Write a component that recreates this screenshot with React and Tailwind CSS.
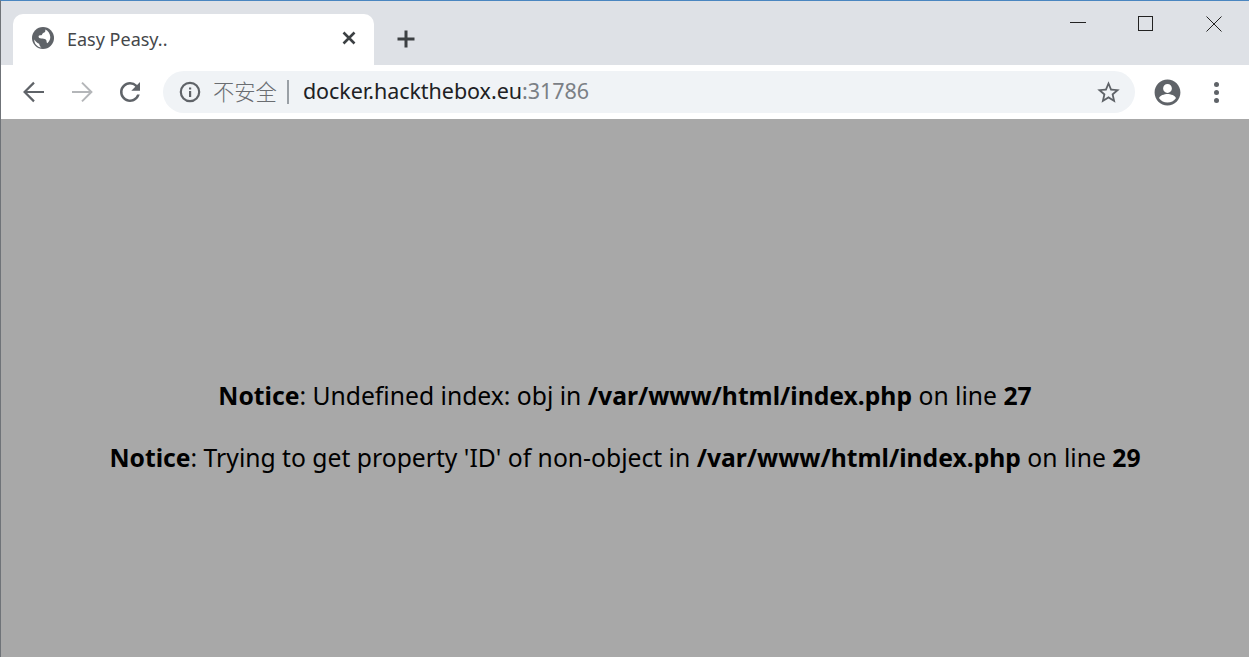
import React from "react";

const Back = ({ color }) => (
  <svg width="24" height="24" viewBox="0 0 24 24" fill="none" stroke={color} strokeWidth="2.200"><path d="M22 12H3.500M12 2.600 2.600 12l9.400 9.400" /></svg>
);
const Forward = ({ color }) => (
  <svg width="24" height="24" viewBox="0 0 24 24" fill="none" stroke={color} strokeWidth="2"><path d="M2 12h18.500M12 2.600l9.400 9.400-9.400 9.400" /></svg>
);

export default function App() {
  return (
    <div className="w-[1249px] h-[657px] flex flex-col overflow-hidden border-l border-[#6f7378] border-t border-t-[#4a86c0] font-['Noto_Sans',sans-serif] bg-[#a8a8a8]">
      {/* tab strip */}
      <div className="h-[64px] shrink-0 bg-[#dee1e6] flex items-end pl-[12px] relative">
        <div className="w-[361px] h-[51px] bg-white rounded-t-[10px] flex items-center pl-[19px] pr-[18px] pb-[3px]">
          <svg width="22" height="22" viewBox="0 0 22 22" className="shrink-0">
            <circle cx="11" cy="11" r="11" fill="#5f6368" />
            <path d="M9.500 20.500c-1.500-.8-2.200-2.400-2.300-3.800-1.600-.5-3.600-1.900-4.900-4.200-.3 3.900 2.800 7.600 7.200 8ZM13 2.400c.7 1 .4 2.400-.7 3.100-.9.500-1.900.9-2.200 1.900-.2.800-1.200.9-2.100.9-1 0-1.700.8-1.300 2 .5 1.200 2.100 1.100 3.600 1.200 1.800.1 3.500.5 4 1.800.4 1.100.2 2.300 1 3 1.700-1.300 3-3.600 3-6.200-.3-3.800-2.300-6.700-5.300-7.700Z" fill="#fff" />
          </svg>
          <span className="ml-[13px] text-[18px] leading-none text-[#45474a] font-['Noto_Sans',sans-serif] translate-y-[1px]">Easy Peasy..</span>
          <svg width="14" height="14" viewBox="0 0 14 14" stroke="#3c4043" strokeWidth="2.600" className="ml-auto"><path d="M1.500 1.500l11 11M12.500 1.500l-11 11" /></svg>
        </div>
        <svg width="20" height="20" viewBox="0 0 20 20" stroke="#3c4043" strokeWidth="3" className="ml-[22px] mb-[16px]"><path d="M10 1.500v17M1.500 10h17" /></svg>
        {/* window controls */}
        <div className="absolute top-0 right-0 flex items-start">
          <div className="w-[68px] h-[44px] flex justify-center pt-[21px]"><div className="w-[16px] h-px bg-[#222]" /></div>
          <div className="w-[68px] h-[44px] flex justify-center pt-[15px] pr-[2px]"><div className="w-[15px] h-[15px] border border-[#222]" /></div>
          <div className="w-[69px] h-[44px] flex justify-center pt-[15px] pr-[2px]">
            <svg width="16" height="16" viewBox="0 0 16 16" stroke="#222" strokeWidth="1"><path d="M.5.500l15 15M15.500.500l-15 15" /></svg>
          </div>
        </div>
      </div>

      {/* toolbar */}
      <div className="h-[54px] shrink-0 bg-white flex items-center pl-[21px]">
        <Back color="#5f6368" />
        <div className="ml-[24px]"><Forward color="#b4b6b9" /></div>
        <svg width="24" height="24" viewBox="0 0 24 24" fill="#5f6368" className="ml-[24px]">
          <path d="M19.100 4.900A9.950 9.950 0 0 0 12 2C6.500 2 2 6.500 2 12s4.500 10 10 10c4.700 0 8.600-3.200 9.700-7.500h-2.600A7.500 7.500 0 1 1 12 4.500c2.100 0 3.900.9 5.300 2.200L13.300 10.700H22V2l-2.900 2.900Z" />
        </svg>
        <div className="ml-[21px] w-[972px] h-[42px] rounded-full bg-[#f0f3f6] flex items-center pl-[16px] pr-[16px]">
          <svg width="22" height="22" viewBox="0 0 22 22" className="shrink-0">
            <circle cx="11" cy="11" r="9.200" fill="none" stroke="#5f6368" strokeWidth="2.200" />
            <rect x="10" y="10" width="2.200" height="6" fill="#5f6368" />
            <rect x="10" y="6.500" width="2.200" height="2" fill="#5f6368" />
          </svg>
          <span className="ml-[12px] text-[21.300px] leading-none text-[#6a6d71] font-['Noto_Sans_CJK_SC',sans-serif] font-light -translate-y-[1px]">不安全</span>
          <div className="ml-[10px] w-[2px] h-[24px] bg-[#9aa0a6]" />
          <span className="ml-[14px] text-[21.500px] leading-none text-[#202124] font-['Noto_Sans',sans-serif] whitespace-nowrap -translate-y-[1px] tracking-[-0.050px]">
            docker.hackthebox.eu<span className="text-[#7b8085]">:31786</span>
          </span>
          <svg width="27" height="27" viewBox="0 0 24 24" fill="#5f6368" className="ml-auto mr-[-3px]">
            <path d="M22 9.240l-7.190-.620L12 2 9.190 8.630 2 9.240l5.460 4.730L5.820 21 12 17.270 18.180 21l-1.630-7.030L22 9.240ZM12 15.400l-3.760 2.270 1-4.280-3.320-2.880 4.380-.380L12 6.100l1.710 4.040 4.380.380-3.320 2.880 1 4.280L12 15.400Z" />
          </svg>
        </div>
        <svg width="31" height="31" viewBox="0 0 24 24" fill="#5f6368" className="ml-[17px]">
          <path d="M12 2C6.480 2 2 6.480 2 12s4.480 10 10 10 10-4.480 10-10S17.520 2 12 2Zm0 3.500c1.900 0 3.400 1.500 3.400 3.400s-1.500 3.400-3.400 3.400-3.400-1.500-3.400-3.400 1.500-3.400 3.400-3.400Zm0 14.300c-2.700 0-5.100-1.400-6.500-3.400.1-2.100 4.300-3.300 6.500-3.300s6.400 1.200 6.500 3.300c-1.400 2-3.800 3.400-6.500 3.400Z" />
        </svg>
        <div className="ml-[31px] flex flex-col gap-[3px]">
          <div className="w-[5px] h-[5px] rounded-full bg-[#5f6368]" />
          <div className="w-[5px] h-[5px] rounded-full bg-[#5f6368]" />
          <div className="w-[5px] h-[5px] rounded-full bg-[#5f6368]" />
        </div>
      </div>

      {/* page */}
      <div className="flex-1 flex flex-col items-center pt-[259px] text-black text-[24.700px] leading-[36px] gap-[26px] font-['Noto_Sans',sans-serif] whitespace-nowrap">
        <p><b>Notice</b>: Undefined index: obj in <b>/var/www/html/index.php</b> on line <b>27</b></p>
        <p><b>Notice</b>: Trying to get property 'ID' of non-object in <b>/var/www/html/index.php</b> on line <b>29</b></p>
      </div>
    </div>
  );
}
